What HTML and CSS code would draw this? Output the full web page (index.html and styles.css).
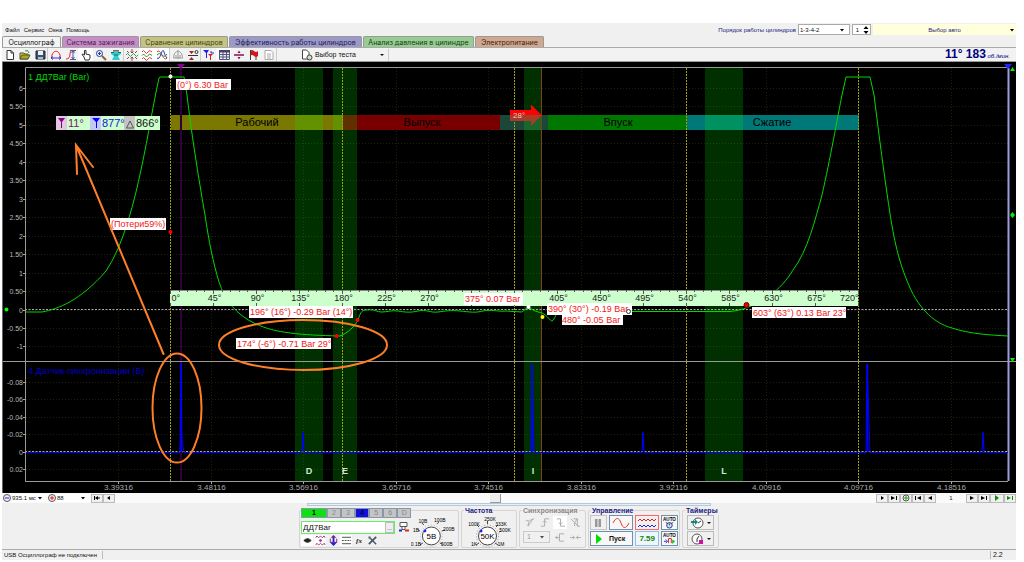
FILE: index.html
```html
<!DOCTYPE html>
<html lang="ru">
<head>
  <meta charset="UTF-8">
  <meta name="viewport" content="width=device-width, initial-scale=1.0">
  <title>USB Осциллограф</title>
  <link rel="stylesheet" href="styles.css">
</head>
<body>
  <div class="app">
    <header class="top">
      <nav class="menu">
        <a href="#">Файл</a>
        <a href="#">Сервис</a>
        <a href="#">Окна</a>
        <a href="#">Помощь</a>
      </nav>
      <div class="engine">
        <label for="order">Порядок работы цилиндров</label>
        <select id="order" class="order"><option>1-3-4-2</option></select>
        <div class="spin">
          <input type="text" value="1" aria-label="Цилиндр">
          <svg width="8" height="10" viewBox="0 0 8 10"><path d="M4 1l2.500 3h-5zM4 9L1.500 6h5z"/></svg>
        </div>
        <select class="car" aria-label="Авто"><option>Выбор авто</option></select>
      </div>
    </header>

    <nav class="tabs">
      <a href="#" class="tab active">Осциллограф</a>
      <a href="#" class="tab pink">Система зажигания</a>
      <a href="#" class="tab olive">Сравнение цилиндров</a>
      <a href="#" class="tab violet">Эффективность работы цилиндров</a>
      <a href="#" class="tab mint">Анализ давления в цилиндре</a>
      <a href="#" class="tab peach">Электропитание</a>
    </nav>

    <div class="toolbar">
      <div class="tools">
        <button aria-label="Новый"><svg viewBox="0 0 12 12"><path d="M3 1.500h4l2.500 2.500v6.500H3zM7 1.500V4h2.500" fill="#fff" stroke="#333"/></svg></button>
        <button aria-label="Открыть"><svg viewBox="0 0 12 12"><path d="M1 4h4l1 1h3v5H1z" fill="#dc3" stroke="#553"/><path d="M1 10l2-4h8l-2 4z" fill="#aa2" stroke="#553"/><path d="M6 2q3-2 4 2" fill="none" stroke="#292"/></svg></button>
        <button aria-label="Сохранить"><svg viewBox="0 0 12 12"><path d="M2 2h9v8H2z" fill="#357" stroke="#223"/><path d="M4 2h5v4H4z" fill="#eee"/><path d="M4 8h5v2H4z" fill="#bbb"/></svg></button>
      </div>
      <div class="tools">
        <button aria-label="Период"><svg viewBox="0 0 12 12"><path d="M1.500 9C2 0 10 0 10.500 9" fill="none" stroke="#e22"/><path d="M1 9h10M3 7.500L1 9l2 1.500M9 7.500L11 9l-2 1.500" fill="none" stroke="#33c"/></svg></button>
        <button aria-label="Амплитуда"><svg viewBox="0 0 12 12"><path d="M1 10q4 0 4-5t5-3" fill="none" stroke="#e22"/><path d="M8 2v8M6.500 4L8 2l1.500 2M6.500 8L8 10l1.500-2M5 1.500h6M5 10.500h6" fill="none" stroke="#55a"/></svg></button>
        <button class="down" aria-label="Рука"><svg viewBox="0 0 12 12"><path d="M4 8L2 5.500l1-.5 1.500 1V1.500h1.500V5l4 1v3l-1 2H5z" fill="#fff" stroke="#333"/></svg></button>
        <button aria-label="Лупа"><svg viewBox="0 0 12 12"><circle cx="4.500" cy="4.500" r="3" fill="#dff" stroke="#339"/><path d="M3 4.500h3M4.500 3v3" stroke="#339"/><path d="M7 7l4 4" stroke="#863" stroke-width="2"/></svg></button>
        <button aria-label="Фильтр"><svg viewBox="0 0 12 12"><path d="M3 1h6v2h2v2L8 7l2 4H2l2-4-3-2V3h2z" fill="#3cc"/><path d="M1 3.500h3M8 3.500h3M4 6h4" stroke="#077"/><path d="M3 1.500h6" stroke="#c44"/></svg></button>
      </div>
      <div class="tools">
        <button aria-label="Центр"><svg viewBox="0 0 12 12"><path d="M0 6q1.500-3 3 0t3 0 3 0 3 0" fill="none" stroke="#2a5"/><path d="M6 0v4M6 12V8M4.500 2.500L6 4l1.500-1.500M4.500 9.500L6 8l1.500 1.500M1 2l2 2M11 2L9 4M1 10l2-2M11 10L9 8" stroke="#944" fill="none"/></svg></button>
        <button class="down" aria-label="Каналы"><svg viewBox="0 0 12 12" fill="none"><path d="M1 3q1.500-3 3 0t3 0 4 0" stroke="#e33"/><path d="M1 6.500q1.500-3 3 0t3 0 4 0" stroke="#292"/><path d="M1 10q1.500-3 3 0t3 0 4 0" stroke="#e33"/></svg></button>
        <button class="down" aria-label="Наложение"><svg viewBox="0 0 12 12" fill="none"><path d="M1 3q2-3 5 3t5 3" stroke="#e33"/><path d="M1 9q2 2 4-4t3-2 3 6" stroke="#33c"/><path d="M1 6q2-3 5 0t5-1" stroke="#292"/></svg></button>
      </div>
      <div class="tools">
        <button disabled aria-label="Баланс"><svg viewBox="0 0 12 12" fill="none" stroke="#999"><path d="M1.500 9C2 0 10 0 10.500 9zM6 1v9M4 6v3M8 6v3"/></svg></button>
        <button aria-label="Ноль"><svg viewBox="0 0 12 12"><path d="M1 6.500h10" stroke="#333"/><path d="M2 2h5L4.500 5zM2 11h5L4.500 8z" fill="#a22"/><circle cx="9.500" cy="3" r="1.500" fill="none" stroke="#333"/></svg></button>
      </div>
      <div class="tools">
        <button aria-label="Маркер"><svg viewBox="0 0 12 12"><path d="M0 1h6L4 4v5H3V4z" fill="#22d"/><path d="M5 5h5L8 7v4H7V7z" fill="#c22"/><path d="M8 2v2h3" fill="none" stroke="#22d"/></svg></button>
        <button class="down" aria-label="Таблица"><svg viewBox="0 0 12 12"><path d="M1.500 1.500h10v9h-10zM1.500 5.500h10M1.500 8h10M5 3v7M8.500 3v7" fill="#eef" stroke="#557"/><path d="M1 1h11v2.500H1z" fill="#446"/></svg></button>
        <button aria-label="Линия"><svg viewBox="0 0 12 12"><path d="M1 6h10" stroke="#815" stroke-width="1.500"/><path d="M4.500 4L6 1.500 7.500 4zM4.500 8L6 10.500 7.500 8z" fill="#815"/></svg></button>
        <button aria-label="Флаг"><svg viewBox="0 0 12 12"><path d="M2 2q2-2 4 0t4 0v5q-2 2-4 0T2 7z" fill="#d12"/><path d="M2.500 1v10M8 8v3" stroke="#252"/></svg></button>
        <button disabled aria-label="Отчёт"><svg viewBox="0 0 12 12"><path d="M2 1.500h6l2 2v7H2zM4 5h4M4 7h4M4 9h4" fill="#fff" stroke="#aaa"/></svg></button>
      </div>
      <button class="test">
        <svg viewBox="0 0 12 12"><path d="M1.500 1h4L8 3.500V10H1.500z" fill="#fff" stroke="#444"/><circle cx="8.500" cy="8.500" r="2.500" fill="#cdc" stroke="#444"/></svg>
        <span>Выбор теста</span>
        <i class="caret"></i>
      </button>
      <div class="rpm"><b>11° 183</b> <span>об./мин.</span></div>
    </div>

    <svg class="plot" viewBox="2 62 1014 431">
      <rect x="2" y="62" width="1014" height="431" fill="#000"/>
      <g id="grid"></g>

      <!-- такты -->
      <g>
        <rect x="171" y="115" width="172" height="15" fill="#7a7800"/>
        <rect x="343" y="115" width="157" height="15" fill="#780000"/>
        <rect x="500" y="115" width="48" height="15" fill="#1c4638"/>
        <rect x="548" y="115" width="139" height="15" fill="#007800"/>
        <rect x="687" y="115" width="172" height="15" fill="#007878"/>
      </g>
      <g class="band">
        <rect x="295" y="68" width="28" height="413"/>
        <rect x="333" y="68" width="24" height="413"/>
        <rect x="524" y="68" width="18" height="413"/>
        <rect x="705" y="68" width="38" height="413"/>
      </g>
      <g class="tdc">
        <path d="M170.500 68V481M342.500 68V481M514.500 68V481M686.500 68V481M858.500 68V481"/>
      </g>
      <path d="M541.500 68V481" stroke="#8a3a14"/>
      <path d="M181 68V481" stroke="#320038" stroke-width="2"/>
      <g class="phase">
        <text x="257" y="126">Рабочий</text>
        <text x="422" y="126">Выпуск</text>
        <text x="618" y="126">Впуск</text>
        <text x="772" y="126">Сжатие</text>
      </g>
      <path d="M510 110h21v-5.500l11 11H510z" fill="#f00"/>
      <path d="M510 115h32l-11 11v-5h-21z" fill="#a83c28"/>
      <text x="513" y="118" class="advance">28°</text>

      <!-- нулевые линии и рамка -->
      <path d="M25 309.500H1008M25 451.500H1008" stroke="#aaa" stroke-dasharray="2 1.500"/>
      <path d="M25.500 481V67.500H1008M25 481.500H1008" class="frame"/>
      <path d="M2 361.500H1016" class="frame"/>
      <path d="M2.500 62V493" stroke="#666"/>
      <path d="M1008.500 68V481" stroke="#9c9ce0" stroke-width="2"/>

      <!-- давление -->
      <path class="pressure" d="M26 312H42C58 309 80 301 106 271C124 245 135 198 141 170C149 132 153 105 159 78L160 77H184L187 95C191 130 198 175 205 215C209 242 213 262 219 282C225 300 236 315 256 324C275 333 300 335 340 336C348 333 355 326 358 320C361 311 362 310 367 310C374 309 377 312 382 312S392 310 398 311 410 313 418 311 430 313 438 312 450 310 460 311 475 313 483 311 498 312 506 311L522 312L528 307L535 311L542 313C548 316 550 321 552 321C555 320 556 311 560 311.500H730C745 310 750 306 766 299C780 288 787 280 793 270C808 250 815 220 822 195C830 160 838 115 842 95L846 77H870L874 95C879 135 884 175 891 220C896 250 901 268 911 290C923 315 940 325 952 328C970 334 990 335 1008 336"/>

      <!-- синхронизация -->
      <path class="sync" d="M26 452.500H180L181 363L182 440L184 452.500H302L303 432L304 452.500H531L532 364L534 452.500H642L643 432L644 452.500H866L867 364L870 452.500H982L983 432L984 452.500H1008"/>
      <path d="M532 364V452M867.500 364V452M181 363V452" stroke="#00f" stroke-width="1.500"/>

      <text x="28" y="80" class="name green">1 ДД7Bar (Bar)</text>
      <text x="28" y="374" class="name blue">4 Датчик синхронизации (В)</text>

      <g class="valve">
        <text x="309" y="474">D</text>
        <text x="345" y="474">E</text>
        <text x="533" y="474">I</text>
        <text x="724" y="474">L</text>
      </g>

      <rect x="170" y="290" width="688" height="16" fill="#cfc"/>
      <path d="M170 290.500H858" stroke="#888"/>
      <g id="ruler"></g>

      <!-- показания -->
      <g class="note">
        <rect x="176" y="79" width="55" height="11"/><text x="177" y="88">(0°) 6.30 Bar</text>
        <rect x="110" y="218" width="56" height="12"/><text x="111" y="227">(Потери59%)</text>
        <rect x="249" y="306" width="104" height="12"/><text x="250" y="315">196° (16°) -0.29 Bar (14°)</text>
        <rect x="236" y="338" width="95" height="11"/><text x="237" y="347">174° (-6°) -0.71 Bar 29°</text>
        <rect x="464" y="293" width="59" height="12"/><text x="465" y="302">375° 0.07 Bar</text>
        <rect x="547" y="303" width="85" height="12"/><text x="548" y="312">390° (30°) -0.19 Bar</text>
        <rect x="562" y="314" width="61" height="11"/><text x="562" y="323">480° -0.05 Bar</text>
        <rect x="752" y="307" width="94" height="11"/><text x="753" y="316">603° (63°) 0.13 Bar 23°</text>
      </g>
      <g>
        <circle cx="170.500" cy="76.500" r="2" fill="#fff"/>
        <circle cx="170.500" cy="232" r="2" fill="#f00"/>
        <circle cx="336.500" cy="336" r="2" fill="#f00"/>
        <circle cx="357.500" cy="320" r="2" fill="#f00"/>
        <circle cx="528.500" cy="307" r="2" fill="#fff"/>
        <circle cx="542.500" cy="317" r="2" fill="#ff0"/>
        <circle cx="628.500" cy="311.500" r="2" fill="#fff" stroke="#333"/>
        <circle cx="746.500" cy="305" r="2.500" fill="#e00" stroke="#600"/>
        <circle cx="6.500" cy="309.500" r="2" fill="#0f0"/>
        <path d="M1012.500 212l2.500 3-2.500 3-2.500-3zM1010 71l2.500-4 2.500 4zM1010 358h5l-2.500 4z" fill="#0e0"/>
        <path d="M177 64h8l-4 5z" fill="#808"/>
        <path d="M1004 64h8l-4 5z" fill="#22f"/>
      </g>

      <g class="cursor">
        <rect x="56" y="116" width="104" height="14" fill="#cfc"/>
        <rect x="56" y="116" width="11" height="14" fill="#e0c8e0"/>
        <rect x="90" y="116" width="11" height="14" fill="#c4c8f8"/>
        <rect x="124" y="116" width="11" height="14" fill="#c4c4c4"/>
        <path d="M58 118h7l-3 4v6h-1v-6z" fill="#808"/>
        <path d="M92 118h8l-3 4v6h-1v-6z" fill="#00f"/>
        <path d="M126.500 128l3.500-7 3.500 7z" fill="none" stroke="#555"/>
        <text x="68" y="127" fill="#74206c">11°</text>
        <text x="102" y="127" fill="#1414d8">877°</text>
        <text x="136" y="127" fill="#111">866°</text>
      </g>

      <!-- пометки -->
      <g class="marks">
        <path d="M163.500 354L76 145M77 174L76 145L93 167"/>
        <ellipse cx="177" cy="408" rx="24.500" ry="54.500"/>
        <ellipse cx="303" cy="345" rx="84" ry="25"/>
      </g>
    </svg>

    <div class="navbar">
      <svg viewBox="0 0 10 10"><circle cx="5" cy="5" r="3.500" fill="#eef" stroke="#555"/><path d="M3 5h4" stroke="#22c"/></svg>
      <select class="sweep" aria-label="Развёртка"><option>935.1 мс</option></select>
      <svg viewBox="0 0 10 10"><circle cx="5" cy="5" r="3.500" fill="#fee" stroke="#555"/><path d="M3 5h4M5 3v4" stroke="#c22"/></svg>
      <select class="zoom" aria-label="Масштаб"><option>88</option></select>
      <button class="nav" aria-label="В начало"><svg viewBox="0 0 10 8"><path d="M2 2h1v4H2zM3 4l3-2v1.500h2v1H6V6z"/></svg></button>
      <button class="nav" aria-label="Назад"><svg viewBox="0 0 10 8"><path d="M3 4l3-2v4z"/></svg></button>
      <div class="scroll"><i class="thumb"></i></div>
      <button class="nav" aria-label="Вперёд"><svg viewBox="0 0 10 8"><path d="M4 2l3 2-3 2z"/></svg></button>
      <button class="nav" aria-label="В конец"><svg viewBox="0 0 10 8"><path d="M2 2l4 2-4 2zM7 2h1v4H7z"/></svg></button>
      <button class="nav" aria-label="Добавить"><svg viewBox="0 0 10 8"><circle cx="5" cy="4" r="3" fill="#efe" stroke="#555"/><path d="M3 4h4M5 2v4" stroke="#292"/></svg></button>
      <button class="nav" aria-label="Первый кадр"><svg viewBox="0 0 10 8"><path d="M2 2h1v4H2zM8 2L4 4l4 2z"/></svg></button>
      <button class="nav" aria-label="Предыдущий кадр"><svg viewBox="0 0 10 8"><path d="M7 2L3 4l4 2z"/></svg></button>
      <input class="frameno" type="text" value="1" aria-label="Кадр">
      <button class="nav" aria-label="Следующий кадр"><svg viewBox="0 0 10 8"><path d="M3 2l4 2-4 2z"/></svg></button>
      <button class="nav" aria-label="Последний кадр"><svg viewBox="0 0 10 8"><path d="M2 2l4 2-4 2zM7 2h1v4H7z"/></svg></button>
      <button class="nav wide" aria-label="Воспроизвести"><svg viewBox="0 0 10 8"><path d="M3 1l4 3-4 3z" fill="#181"/></svg></button>
      <button class="nav" aria-label="До конца"><svg viewBox="0 0 10 8"><path d="M2 2l4 2-4 2zM7 2h1v4H7z" fill="#181"/></svg></button>
    </div>

    <div class="panel">
      <div class="splitter"></div>
      <div class="groups">
        <section class="group channel">
          <div class="chcol">
            <div class="channels">
              <button class="on1">1</button><button>2</button><button>3</button><button class="on4">4</button><button>5</button><button>6</button><button>D</button>
            </div>
            <div class="sensor">
              <div class="field"><input type="text" value="ДД7Bar" aria-label="Датчик"><button>...</button></div>
              <svg width="12" height="12" viewBox="0 0 12 12"><path d="M2 1.500h7v4H2zM4 5.500v3h3v-3" fill="#fff" stroke="#555"/><path d="M1 9.500h3" stroke="#22c" stroke-width="2"/><path d="M7 9.500h4" stroke="#d22" stroke-width="2"/></svg>
            </div>
            <div class="chtools">
              <button class="down" aria-label="Видимость"><svg viewBox="0 0 12 12"><path d="M2 6q4-4 8 0-4 4-8 0z" fill="#222" stroke="#222"/></svg></button>
              <button class="down" aria-label="Сглаживание"><svg viewBox="0 0 12 12"><path d="M1 3l1-2 2 2 2-2 2 2 2-2 1 2M1 11l1-2 2 2 2-2 2 2 2-2 1 2" fill="none" stroke="#936"/><path d="M4 6l2-2 2 2-2 2z" fill="#a4a"/></svg></button>
              <button aria-label="Инверсия"><svg viewBox="0 0 12 12"><path d="M6 2v8" stroke="#22d" stroke-width="2"/><path d="M6 0l3 3H3z" fill="#727"/><path d="M6 12L2 8h8z" fill="#22d"/><path d="M2.500 4v4h7V4" fill="none" stroke="#727"/></svg></button>
              <button class="down" aria-label="Связь"><svg viewBox="0 0 12 12"><path d="M1 2.500h10M1 9.500h10" stroke="#444"/><path d="M1 6h10" stroke="#444" stroke-dasharray="2 1"/></svg></button>
              <button class="fx" aria-label="Функция">fx</button>
              <button aria-label="Настройка"><svg viewBox="0 0 12 12"><path d="M2 10l8-8" stroke="#555" stroke-width="2"/><path d="M2 2l8 8" stroke="#357" stroke-width="1.500"/><circle cx="3" cy="3" r="1.500" fill="#777"/></svg></button>
            </div>
          </div>
          <svg class="dial" viewBox="412 511 47 37">
            <path d="M424 543l-3 2M441 543l3 2M421 531l-2-1M425 525l-2-2M438 524l2-2M443 531l3-1" stroke="#444"/>
            <circle cx="432.500" cy="536" r="11" fill="none" stroke="#bbb" stroke-dasharray="1 2"/>
            <circle cx="432.500" cy="536" r="9" fill="#fff" stroke="#444"/>
            <circle cx="426" cy="531" r="1.500" fill="#22f"/>
            <text x="432.500" y="539" class="val">5В</text>
            <text x="424" y="523">10В</text><text x="441" y="522">100В</text>
            <text x="417" y="532">1В</text><text x="450" y="531">200В</text>
            <text x="417" y="546">0.1В</text><text x="448" y="546">500В</text>
          </svg>
        </section>

        <section class="group freq">
          <h2>Частота</h2>
          <svg class="dial" viewBox="462 511 54 37">
            <path d="M479 543l-3 2M495 543l3 2M479 527l-2-2M487.500 524v-3M496 527l2-2M499 532l2-1" stroke="#444"/>
            <circle cx="487.500" cy="536" r="11" fill="none" stroke="#999" stroke-dasharray="1 2"/>
            <circle cx="487.500" cy="536" r="9" fill="#fff" stroke="#444"/>
            <circle cx="481" cy="531" r="1.500" fill="#22f"/>
            <text x="487.500" y="539" class="val">50K</text>
            <text x="490" y="521">250K</text><text x="474" y="526">100K</text>
            <text x="501" y="526">333K</text><text x="505" y="532">500K</text>
            <text x="474" y="546">1K</text><text x="501" y="546">1M</text>
          </svg>
        </section>

        <section class="group trigger">
          <h2>Синхронизация</h2>
          <div class="line">
            <button disabled aria-label="Фронт"><svg viewBox="0 0 12 12"><path d="M1 4h3M4 10V5q3-3 6-3M2 9q4 0 6-7"/></svg></button>
            <button disabled aria-label="Подъём"><svg viewBox="0 0 12 12"><path d="M1 10h4V2h5M3 6l2-2 2 2"/></svg></button>
            <button disabled class="down" aria-label="Спад"><svg viewBox="0 0 12 12"><path d="M2 2h4v8h5M4 6l2 2 2-2"/></svg></button>
            <button disabled aria-label="Любой"><svg viewBox="0 0 12 12"><path d="M1 2l4 4 3-4M4 2h4v8h3M5 10V6l4 4"/></svg></button>
          </div>
          <div class="line">
            <select disabled aria-label="Канал синхронизации"><option>1</option></select>
            <button disabled aria-label="Вход"><svg viewBox="0 0 12 12"><path d="M1 6h5M6 2h5M6 2v8h5M4 4L2 6l2 2"/></svg></button>
            <button disabled aria-label="Центр"><svg viewBox="0 0 12 12"><path d="M0 6h5M7 6h5M3 4l2 2-2 2M9 4L7 6l2 2"/></svg></button>
          </div>
        </section>

        <section class="group control">
          <h2>Управление</h2>
          <div class="keys">
            <button class="pause" aria-label="Пауза"><svg viewBox="0 0 12 12"><path d="M3 2h2.500v8H3zM6.500 2H9v8H6.500z" fill="#999"/></svg></button>
            <button class="blue" aria-label="Синус"><svg viewBox="0 0 20 12"><path d="M2 6c3-6 6-6 8 0s5 6 8 0" fill="none" stroke="#e33"/></svg></button>
            <button class="red" aria-label="Поток"><svg viewBox="0 0 20 12"><path d="M1 4l2-2 2 2 2-2 2 2 2-2 2 2 2-2 2 2 2-2" fill="none" stroke="#d22"/><path d="M1 10l2-2 2 2 2-2 2 2 2-2 2 2 2-2 2 2 2-2" fill="none" stroke="#22d"/></svg></button>
            <button class="blue auto" aria-label="Авто время"><svg viewBox="0 0 14 13"><text x="7" y="4">AUTO</text><circle cx="7" cy="9" r="3" fill="#cdf" stroke="#236"/><path d="M7 9V7M3 6l2 1M11 6L9 7" stroke="#236"/></svg></button>
          </div>
          <div class="keys">
            <button class="blue start"><svg viewBox="0 0 8 12"><path d="M1 1l6 5-6 5z" fill="#0d0"/></svg><span>Пуск</span></button>
            <button class="sky">7.59</button>
            <button class="blue auto" aria-label="Авто пуск"><svg viewBox="0 0 14 13"><text x="7" y="4">AUTO</text><path d="M1 9h3M3 7l2 2-2 2" fill="none" stroke="#22d"/><path d="M6 11V6h3v5" fill="none" stroke="#c22"/><path d="M10 7l3 2-3 3z" fill="#0b0"/></svg></button>
          </div>
        </section>

        <section class="group timers">
          <h2>Таймеры</h2>
          <button aria-label="Таймер старта"><svg viewBox="0 0 14 12"><circle cx="8" cy="6" r="5" fill="#fff" stroke="#555"/><path d="M8 6l3-2" stroke="#333"/><path d="M1 4h4V2l3 3-3 3V6H1z" fill="#188"/></svg><i class="caret"></i></button>
          <button aria-label="Таймер стопа"><svg viewBox="0 0 14 12"><circle cx="7" cy="6" r="5" fill="#fff" stroke="#555"/><path d="M7 6l2-3M7 6v3" stroke="#333"/><path d="M9 7h4v4H9z" fill="#c1a"/></svg><i class="caret"></i></button>
        </section>
      </div>
    </div>

    <footer class="status">
      <span class="state">USB Осциллограф не подключен</span>
      <span class="fill"></span>
      <span class="ver">2.2</span>
    </footer>
  </div>

  <script>
    const grid = document.getElementById("grid");
    const ruler = document.getElementById("ruler");
    let g = "";

    // Шкала давления
    for (let i = 0; i <= 14; i++) {
      const v = 6 - i * 0.5;
      const y = Math.round(88 + i * 18.46) + 0.5;
      const label = Number.isInteger(v) ? v : v.toFixed(2);
      g += `<path class="dots" d="M26 ${y}H1008"/><path class="tick" d="M23 ${y}h3"/>`;
      g += `<text class="ylab" x="23" y="${y + 2}">${label}</text>`;
    }

    // Шкала датчика синхронизации
    ["-0.08", "-0.06", "-0.04", "-0.02", "0", "0.02"].forEach((label, i) => {
      const y = Math.round(382 + i * 17.4) + 0.5;
      g += `<path class="dots" d="M26 ${y}H1008"/><path class="tick" d="M23 ${y}h3"/>`;
      g += `<text class="ylab" x="23" y="${y + 2}">${label}</text>`;
    });

    // Шкала времени
    for (let i = 0; i < 10; i++) {
      const x = Math.round(118 + i * 92.5) + 0.5;
      const t = (3.39316 + i * 0.088).toFixed(5);
      g += `<path class="dots" d="M${x} 68V481"/><path class="tick" d="M${x} 481v3"/>`;
      g += `<text class="xlab" x="${x}" y="490">${t}</text>`;
    }
    grid.innerHTML = g;

    // Линейка углов, деление 9 градусов; 315 и 360 закрыты показанием
    let r = "";
    for (let a = 0; a <= 720; a += 9) {
      const x = 170.5 + Math.round(a * 0.955);
      const big = a % 45 === 0;
      r += `<path d="M${x} 290v${big ? 4 : 2}M${x} 306v-${big ? 3 : 0}" stroke="#555"/>`;
      if (big && a !== 315 && a !== 360) {
        const anchor = a === 0 ? "start" : a === 720 ? "end" : "middle";
        r += `<text x="${x + (a === 720 ? 0 : 1)}" y="301" text-anchor="${anchor}">${a}°</text>`;
      }
    }
    ruler.innerHTML = r;
  </script>
</body>
</html>
```
FILE: styles.css
```css
* {
  box-sizing: border-box;
}

body {
  margin: 0;
  background: #fff;
  font-family: "Liberation Sans", Arial, sans-serif;
  font-size: 6px;
  line-height: 8px;
  color: #111;
}

button, input, select {
  font: inherit;
  color: inherit;
  margin: 0;
  padding: 0;
  border: 0;
  border-radius: 0;
  background: none;
}

select {
  appearance: none;
  background: #fff url('data:image/svg+xml,<svg xmlns="http://www.w3.org/2000/svg" width="8" height="8"><path d="M2 3h4L4 5.500z" fill="black"/></svg>') no-repeat right 3px center;
}

button {
  display: flex;
  align-items: center;
  justify-content: center;
}

a {
  color: inherit;
  text-decoration: none;
}

.app {
  margin: 23px 8px 0 2px;
  background: #f0f0f0;
}

.caret {
  border: 2px solid transparent;
  border-top-color: #111;
  border-bottom: 0;
}

.top {
  display: flex;
  justify-content: space-between;
  height: 13px;
}

.menu {
  display: flex;
  align-items: center;
  gap: 4px;
  padding-left: 3px;
}

.engine {
  display: flex;
  align-items: center;
  gap: 2px;
  color: #1a1a80;
}

.order {
  width: 52px;
  height: 11px;
  padding-left: 1px;
  border: 1px solid #aaa;
  color: #111;
}

.spin {
  display: flex;
  align-items: center;
  width: 19px;
  height: 11px;
  border: 1px solid #aaa;
  background: #fff;
  color: #111;
}

.spin input {
  width: 9px;
  text-align: center;
}

.car {
  width: 143px;
  height: 11px;
  background-color: #ffffdc;
  background-position: right 0 center;
  text-align: center;
  text-align-last: center;
}

.tabs {
  display: flex;
  height: 11px;
  gap: 1px;
}

.tab {
  padding-top: 2px;
  border: 1px solid #999;
  border-bottom: 0;
  border-radius: 2px 2px 0 0;
  font-family: "Inter", sans-serif;
  font-size: 7px;
  text-align: center;
  white-space: nowrap;
}

.active { width: 59px; background: #f4f4f4; }
.pink { width: 77px; background: #c88cc8; color: #502050; }
.olive { width: 88px; background: #c4c480; color: #404010; }
.violet { width: 133px; background: #9c98c8; color: #202050; }
.mint { width: 111px; background: #98cc90; color: #104010; }
.peach { width: 69px; background: #d0a890; color: #402010; }

.toolbar {
  display: flex;
  align-items: center;
  height: 15px;
  border-top: 1px solid #aaa;
  border-bottom: 1px solid #999;
  background: #f2f2f2;
}

.tools {
  display: flex;
  border-right: 1px solid #ccc;
}

.tools button {
  width: 15px;
  height: 13px;
}

.tools svg {
  width: 12px;
  height: 12px;
}

.down {
  background: #fff;
}

.test {
  gap: 2px;
  margin-left: 24px;
  padding-right: 4px;
  width: 88px;
  font-size: 7px;
  border-right: 1px solid #ccc;
}

.test svg {
  width: 12px;
  height: 12px;
}

.test .caret {
  margin-left: auto;
}

.rpm {
  margin-left: auto;
  padding-right: 6px;
  color: #000080;
}

.rpm b {
  font-size: 12px;
  line-height: 13px;
}

.rpm span {
  font-style: italic;
}

/* график */
.plot {
  display: block;
  width: 100%;
}

.plot .dots {
  stroke: #1c2208;
  stroke-dasharray: 1 2;
}

.plot .tick {
  stroke: #aaa;
}

.plot .frame {
  fill: none;
  stroke: #999;
}

.ylab {
  font-size: 7px;
  fill: #bbb;
  text-anchor: end;
}

.xlab {
  font-size: 8px;
  fill: #aaa;
  text-anchor: middle;
}

.band {
  fill: #0f0;
  fill-opacity: 0.19;
}

.tdc {
  stroke: #a0a010;
  stroke-dasharray: 2 1;
}

.phase {
  font-size: 11px;
  text-anchor: middle;
}

.advance {
  font-size: 8px;
  fill: #dcc;
}

.pressure {
  fill: none;
  stroke: #00d800;
}

.sync {
  fill: none;
  stroke: #00f;
}

.name {
  font-size: 9px;
}

.green { fill: #00d800; }
.plot .blue { fill: #0000c0; }

.valve {
  font-size: 9px;
  font-weight: bold;
  fill: #cfe8cf;
  text-anchor: middle;
}

#ruler {
  font-size: 9px;
  fill: #222;
}

.note {
  font-size: 9px;
}

.note rect {
  fill: #fff;
}

.note text {
  fill: #f01818;
}

.cursor {
  font-size: 11px;
}

.marks {
  fill: none;
  stroke: #ff7f27;
  stroke-width: 2;
  stroke-linecap: round;
}

/* прокрутка */
.navbar {
  display: flex;
  align-items: center;
  height: 10px;
  background: #fafafa;
}

.navbar > svg {
  width: 10px;
  height: 10px;
}

.sweep {
  width: 35px;
}

.zoom {
  width: 33px;
  margin-right: 1px;
}

.nav {
  width: 12px;
  height: 9px;
  border: 1px solid #bbb;
  background: #f0f0f0;
}

.nav svg {
  width: 10px;
  height: 8px;
}

.nav.wide {
  width: 14px;
}

.scroll {
  flex: 1;
  display: flex;
  justify-content: center;
}

.thumb {
  width: 11px;
  height: 9px;
  border: 1px solid #999;
  border-top: 0;
  border-left: 0;
  background: #eee;
}

.frameno {
  width: 30px;
  text-align: center;
}

/* нижняя панель */
.panel {
  height: 47px;
  padding-bottom: 1px;
  border-bottom: 1px solid #aaa;
}

.splitter {
  width: 404px;
  height: 3px;
  margin: 0 auto;
  border: 1px solid #b8c8d8;
  background: #e4f0fa;
}

.groups {
  display: flex;
  justify-content: center;
  gap: 2px;
  padding-top: 4px;
}

.group {
  position: relative;
  height: 38px;
  border: 1px solid #d4d4d4;
  border-radius: 2px;
}

.group h2 {
  position: absolute;
  top: -4px;
  left: 2px;
  margin: 0;
  padding: 0 1px;
  background: #f0f0f0;
  font-size: 7px;
  line-height: 8px;
  color: #1a1a80;
}

.channel {
  display: flex;
  width: 160px;
  padding-left: 1px;
}

.channel .dial {
  width: 47px;
  height: 37px;
}

.chcol {
  width: 111px;
}

.channels {
  display: flex;
  margin-top: -3px;
}

.channels button {
  flex: 1;
  height: 10px;
  border: 1px solid #8898a8;
  background: #c4c4c4;
  color: #888;
  font-size: 7px;
}

.channels .on1 {
  flex: 0 0 26px;
  background: #10e010;
  color: #000;
  font-weight: bold;
}

.channels .on4 {
  background: #1010e0;
  color: #000;
}

.sensor {
  display: flex;
  gap: 3px;
  margin-top: 3px;
}

.field {
  display: flex;
  width: 94px;
  height: 13px;
  border: 1px solid #6e6;
  background: #fff;
}

.field input {
  flex: 1;
  min-width: 0;
  padding-left: 1px;
  font-size: 8px;
}

.field button {
  width: 9px;
  border: 1px solid #bbb;
  background: #eee;
}

.chtools {
  display: flex;
  gap: 1px;
  margin-top: 1px;
}

.chtools button {
  width: 12px;
  height: 11px;
}

.chtools svg {
  width: 11px;
  height: 11px;
}

.chtools .fx {
  font: italic bold 7px "Liberation Serif", serif;
}

.dial text {
  font-size: 5px;
  text-anchor: middle;
}

.dial .val {
  font-size: 8px;
}

.freq {
  width: 56px;
}

.freq .dial {
  width: 54px;
  height: 37px;
}

.trigger {
  width: 67px;
  padding: 5px 3px 0;
}

.trigger h2 {
  color: #888;
}

.line {
  display: flex;
  justify-content: space-between;
  height: 15px;
}

.line button {
  width: 14px;
  height: 13px;
}

.line svg {
  width: 11px;
  height: 11px;
  fill: none;
  stroke: #aaa;
}

.line select {
  width: 27px;
  height: 12px;
  padding-left: 3px;
  border: 1px solid #bbb;
  background-color: #f0f0f0;
  color: #777;
  font-size: 7px;
}

.control {
  width: 92px;
  padding: 4px 1px 0;
}

.keys {
  display: flex;
  gap: 2px;
  margin-bottom: 1px;
}

.keys button {
  width: 25px;
  height: 15px;
  border: 1px solid #c4c4c4;
}

.keys svg {
  height: 12px;
}

.keys .pause {
  width: 17px;
}

.keys .blue {
  border-color: #7090b0;
  background: #f8f8f8;
}

.keys .red {
  border-color: #f66;
}

.keys .auto {
  width: 17px;
}

.keys .auto text {
  font-size: 5px;
  font-weight: bold;
  text-anchor: middle;
}

.keys .start {
  width: 44px;
  justify-content: flex-start;
  gap: 6px;
  padding-left: 4px;
  font-size: 7px;
  font-weight: bold;
}

.keys .sky {
  border-color: #8cc0e8;
  background: #eef6fc;
  color: #118811;
  font-size: 8px;
  font-weight: bold;
}

.timers {
  width: 37px;
  padding: 4px 4px 0;
}

.timers button {
  width: 27px;
  height: 15px;
  margin-bottom: 1px;
  gap: 3px;
  border: 1px solid #bbb;
}

.timers svg {
  width: 14px;
  height: 12px;
}

.status {
  display: flex;
  align-items: center;
  height: 10px;
}

.state {
  width: 101px;
  padding-left: 2px;
  border-right: 1px solid #bbb;
  white-space: nowrap;
}

.fill {
  flex: 1;
}

.ver {
  width: 26px;
  padding-left: 2px;
  border-left: 1px solid #bbb;
  font-size: 7px;
}
```
